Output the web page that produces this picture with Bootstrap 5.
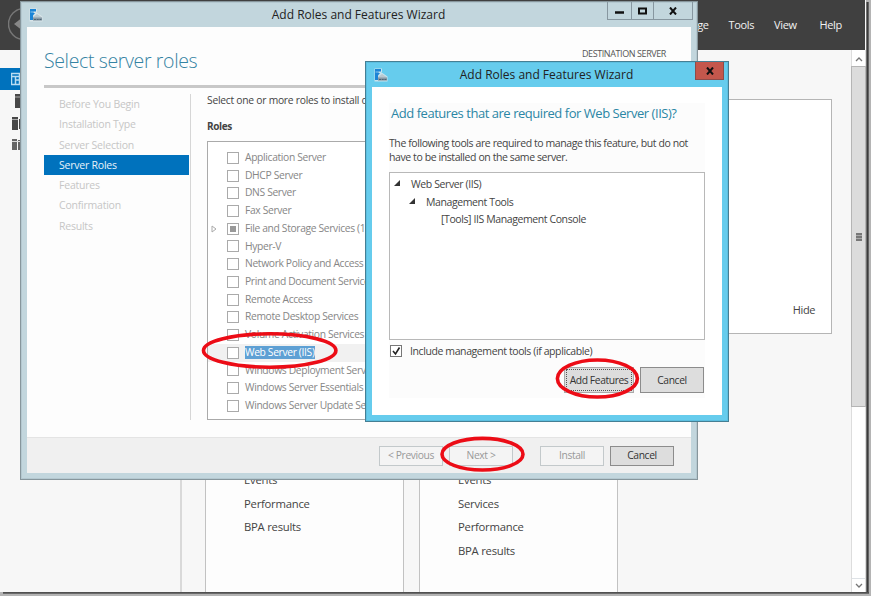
<!DOCTYPE html>
<html lang="en">
<head>
<meta charset="utf-8">
<title>Add Roles and Features Wizard</title>
<meta name="viewport" content="width=device-width, initial-scale=1">
<link href="https://cdn.jsdelivr.net/npm/bootstrap@5.3.0/dist/css/bootstrap.min.css" rel="stylesheet">
<style>
html,body{width:871px;height:596px;overflow:hidden}
body{font-family:"Open Sans","Noto Sans",sans-serif;font-size:11px;line-height:16px;color:#444;background:#b4b4b4;white-space:nowrap}
svg{display:block;flex:none}
.desk{width:871px;height:596px;overflow:hidden}
.manager{width:866px;height:592px;background:#f7f7f7}
.edge-r{width:3px;height:592px;left:866px;top:2px;background:linear-gradient(90deg,#8d8d8d,#3c3c3c,#777)}
.edge-b{left:3px;top:592px;width:866px;height:2px;background:linear-gradient(#444,#777)}
.topbar{height:50px;background:#404040;color:#f2f2f2;padding-left:8px;width:865px}
.topbar .menu-group{margin-left:auto;width:178px}
.topbar .menu-group span{width:46px;letter-spacing:-.35px}
.topbar .menu-group span:first-child{width:42px;margin-left:-2px;margin-right:2px}
.sidebar{width:182px;border-right:2px solid #d9d9d9;padding-top:18px}
.side-item{height:22px;padding-left:11px}
.side-item.on{background:#0072bd}
.stage{width:669px;padding:49px 0 0 23px}
.welcome{width:627px;height:235px;background:#fff;border:1px solid #b5b5b5;padding:0 16px 15px;letter-spacing:-.4px;flex:none}
.tile{width:199px;height:259px;border:1px solid #c2c2c2;border-bottom:0;background:#fdfdfd;padding:133px 0 0 38px;font-size:11.300px;line-height:23.5px;letter-spacing:-.25px}
.sbar{width:15px;border:solid #ddd;border-width:0 1px;background:#fff}
.sbtn{height:14px}
.thumb{height:341px;background:#dcdcdc;border:1px solid #b5b5b5;margin:0 -1px}
.grip{width:6px;height:8px;background:repeating-linear-gradient(#777 0 2px,#aaa 2px 3px)}
.win{border:1px solid #87969c;background:#c2d6dd}
.wizard{left:20px;top:1px;width:678px;height:479px;padding:0 6px 6px;box-shadow:inset 0 0 0 1px #b4c8d0}
.ttl{height:25px;color:#222;font-size:12px}
.ttl .appicon{margin-left:2px}
.ttl .endgap{width:17px}
.caps{right:4px;top:0;height:18px;border:1px solid #8797a0;border-top:0}
.caps span{border-right:1px solid #8797a0;height:17px}
.caps span:last-child{border:0}
.client{height:410px;background:#fdfdfd;padding:17px 17px 0}
.wfoot{height:36px;background:#f0f0f0;border-top:1px solid #e4e4e4;padding-right:17px}
h1.head{font-size:19.5px;line-height:30px;font-weight:300;color:#3583a3;margin:2px 0 0;letter-spacing:-.37px}
.dest{font-size:9px;letter-spacing:-.41px;color:#555;margin:-1px 8px 0 0;height:14px;line-height:14px}
.rule{height:3px;background:#c8c8c8;margin-top:9px}
.steps{width:147px;height:326px;margin-top:6px;border-right:1px solid #d6d6d6;padding-right:1px;color:#c6c6c6;font-size:10.5px}
.steps div{height:20.3px;line-height:21.500px;padding-left:15px;letter-spacing:-.22px}
.steps .on{background:#0072bd;color:#e9f3fa}
.roles{margin-left:16px;width:460px}
.listbox{width:450px;height:279px;border:1px solid #aaa;background:#fff;padding-top:7px;color:#868686}
.role{height:17.73px;line-height:17.7px;letter-spacing:-.35px;font-size:10.3px}
.role .tw{width:19px;padding-left:3px}
.role.hot{background:#f1f1f1}
.cb{width:12px;height:12px;border:1px solid #aaa;background:#fff;margin-right:6px;flex:none}
.sel{background:#5ea0d4;color:#fff;line-height:13px}
.ubtn{height:20px;width:64px;border:1px solid #c3c9cb;background:#f4f4f4;color:#999;font-size:10.3px;line-height:17px;padding:0;border-radius:0;letter-spacing:-.4px}
.ubtn.act{background:#ddd;border-color:#8c8c8c;color:#333}
.dialog{left:365px;top:61px;width:364px;height:361px;background:#66cced;border-color:#457f94;padding:0 6px 6px;box-shadow:inset 0 0 0 1px #5cbfe0}
.dialog .ttl .endgap{width:17px}
.xred{right:4px;top:0;width:29px;height:18px;background:#c4574c;border:1px solid #8d4c4a;border-top:0}
.dclient{height:328px;background:#fff;padding:16px 17px 0}
.soft{background:#fcfcfc}
h2.ask{font-size:13px;line-height:20px;margin:0 0 14px 2px;font-weight:400;color:#2b86a5;letter-spacing:-.46px}
.msg{font-size:10.5px;line-height:13.5px;letter-spacing:-.41px;height:35px;margin:0}
.tree{height:168px;border:1px solid #b8b8b8;background:#fff;padding-top:2px;letter-spacing:-.4px;font-size:10.5px}
.tree div{height:17.8px}
.inc{letter-spacing:-.4px}
.rings{left:0;top:0;pointer-events:none}
</style>
<script src="https://cdn.jsdelivr.net/npm/bootstrap@5.3.0/dist/js/bootstrap.bundle.min.js"></script>
</head>
<body>
<svg width="0" height="0" class="position-absolute">
  <symbol id="srv" viewBox="0 0 14 14">
    <path d="M.5.500h7.500v3.500H7l6.500 4.500v5H.5z" fill="#dfe8ec" opacity=".8"/>
    <path d="M1 1h6v2.500H4.500V5H6L4 7.500V12H1z" fill="#1b84d6"/>
    <path d="M1.500 4h3" stroke="#8cc6ec"/>
    <path d="M4 12.500V9l4-3 4.500 3v3.500z" fill="#b9c8cf"/>
    <path d="M4 9.500h9v3H4z" fill="#8799a5"/>
    <path d="M5 11.500h7.500" stroke="#4f6474" stroke-width="1.200" stroke-dasharray="2 .7"/>
  </symbol>
  <symbol id="exp" viewBox="0 0 7 7"><path d="M6 0v6H0z" fill="#333"/></symbol>
</svg>
<div class="desk position-relative">
  <div class="manager d-flex flex-column">
    <header class="topbar d-flex align-items-center flex-shrink-0">
      <svg width="34" height="34" viewBox="0 0 34 34"><circle cx="16" cy="16" r="15.500" fill="none" stroke="#777" stroke-width="1.500"/><path d="M6 16l9-7v14z" fill="#888"/></svg>
      <nav class="menu-group d-flex"><span>nage</span><span>Tools</span><span>View</span><span>Help</span></nav>
    </header>
    <div class="d-flex flex-grow-1" style="min-height:0">
      <aside class="sidebar flex-shrink-0">
        <div class="side-item on d-flex align-items-center"><svg width="14" height="14"><path d="M.5 1.500h13v11H.5zM.5 4.500h13M4.500 4.500v8M4.500 8h9M8.500 2v10" fill="none" stroke="#b9dcf1" stroke-width="1.500"/></svg></div>
        <div class="side-item d-flex align-items-center"><svg width="14" height="14"><path d="M4 0h10v14H4z" fill="#484848"/><path d="M4 3h9" stroke="#aaa"/></svg></div>
        <div class="side-item d-flex align-items-center"><svg width="14" height="14"><path d="M1 1h6v13H1zM8 3h6v10H8z" fill="#484848"/><path d="M1 3.500h6" stroke="#aaa"/></svg></div>
        <div class="side-item d-flex align-items-center"><svg width="14" height="12"><path d="M1 0h5v11H1zM7 1h4v10H7zM10 4h4v8h-4z" fill="#666"/><path d="M1 2.500h8" stroke="#ddd"/></svg></div>
      </aside>
      <main class="stage flex-shrink-0 d-flex flex-column">
        <section class="welcome d-flex justify-content-end align-items-end"><span>Hide</span></section>
        <div class="d-flex flex-shrink-0" style="gap:15px">
          <section class="tile"><div>Events</div><div>Performance</div><div>BPA results</div></section>
          <section class="tile"><div>Events</div><div>Services</div><div>Performance</div><div>BPA results</div></section>
        </div>
      </main>
      <div class="sbar d-flex flex-column">
        <div class="sbtn d-flex justify-content-center align-items-center" style="margin-top:2px"><svg width="8" height="5"><path d="M1 4l3-3 3 3" fill="none" stroke="#777" stroke-width="1.300"/></svg></div>
        <div class="thumb d-flex justify-content-center align-items-center"><div class="grip"></div></div>
        <div class="sbtn d-flex justify-content-center align-items-center mt-auto border-top"><svg width="8" height="5"><path d="M1 1l3 3 3-3" fill="none" stroke="#777" stroke-width="1.300"/></svg></div>
      </div>
    </div>
  </div>
  <div class="edge-r position-absolute"></div><div class="edge-b position-absolute"></div>

  <section class="win wizard position-absolute">
    <div class="ttl d-flex align-items-center">
      <svg width="14" height="14" class="appicon"><use href="#srv"/></svg><span class="flex-grow-1 text-center">Add Roles and Features Wizard</span><i class="endgap"></i>
    </div>
    <div class="caps position-absolute d-flex">
      <span class="d-flex align-items-center justify-content-center" style="width:24px"><svg width="9" height="9"><path d="M0 6.500h9" stroke="#111" stroke-width="2.500"/></svg></span>
      <span class="d-flex align-items-center justify-content-center" style="width:22px"><svg width="9" height="8"><path d="M1 1.500h7v5H1z" fill="none" stroke="#111" stroke-width="2"/></svg></span>
      <span class="d-flex align-items-center justify-content-center" style="width:38px"><svg width="8" height="8"><path d="M1 .5l6 7M7 .5l-6 7" stroke="#111" stroke-width="2"/></svg></span>
    </div>
    <div class="client">
      <div class="d-flex justify-content-between"><h1 class="head">Select server roles</h1><div class="pt-1"><div class="dest">DESTINATION SERVER</div></div></div>
      <div class="rule"></div>
      <div class="d-flex">
        <nav class="steps flex-shrink-0"><div>Before You Begin</div><div>Installation Type</div><div>Server Selection</div><div class="on">Server Roles</div><div>Features</div><div>Confirmation</div><div>Results</div></nav>
        <div class="roles">
          <div style="padding-top:4px;font-size:10.3px;letter-spacing:-.25px;height:30px">Select one or more roles to install on the selected server.</div>
          <div class="fw-bold" style="font-size:10px;height:23px;letter-spacing:-.35px">Roles</div>
          <div class="listbox">
            <div class="role d-flex align-items-center"><span class="tw"></span><i class="cb"></i>Application Server</div>
            <div class="role d-flex align-items-center"><span class="tw"></span><i class="cb"></i>DHCP Server</div>
            <div class="role d-flex align-items-center"><span class="tw"></span><i class="cb"></i>DNS Server</div>
            <div class="role d-flex align-items-center"><span class="tw"></span><i class="cb"></i>Fax Server</div>
            <div class="role d-flex align-items-center"><span class="tw"><svg width="6" height="8"><path d="M1 1l4 3-4 3z" fill="none" stroke="#aaa"/></svg></span><i class="cb" style="background:#999;box-shadow:inset 0 0 0 2px #fff"></i>File and Storage Services (1 of 12 installed)</div>
            <div class="role d-flex align-items-center"><span class="tw"></span><i class="cb"></i>Hyper-V</div>
            <div class="role d-flex align-items-center"><span class="tw"></span><i class="cb"></i>Network Policy and Access Services</div>
            <div class="role d-flex align-items-center"><span class="tw"></span><i class="cb"></i>Print and Document Services</div>
            <div class="role d-flex align-items-center"><span class="tw"></span><i class="cb"></i>Remote Access</div>
            <div class="role d-flex align-items-center"><span class="tw"></span><i class="cb"></i>Remote Desktop Services</div>
            <div class="role d-flex align-items-center"><span class="tw"></span><i class="cb"></i>Volume Activation Services</div>
            <div class="role hot d-flex align-items-center"><span class="tw"></span><i class="cb"></i><span class="sel">Web Server (IIS)</span></div>
            <div class="role d-flex align-items-center"><span class="tw"></span><i class="cb"></i>Windows Deployment Services</div>
            <div class="role d-flex align-items-center"><span class="tw"></span><i class="cb"></i>Windows Server Essentials Experience</div>
            <div class="role d-flex align-items-center"><span class="tw"></span><i class="cb"></i>Windows Server Update Services</div>
          </div>
        </div>
      </div>
    </div>
    <div class="wfoot d-flex align-items-center justify-content-end">
      <button class="btn ubtn">&lt; Previous</button><button class="btn ubtn" style="margin:0 27px 0 6px">Next &gt;</button><button class="btn ubtn" style="margin-right:6px">Install</button><button class="btn ubtn act">Cancel</button>
    </div>
  </section>

  <section class="win dialog position-absolute">
    <div class="ttl d-flex align-items-center"><svg width="14" height="14" class="appicon"><use href="#srv"/></svg><span class="flex-grow-1 text-center">Add Roles and Features Wizard</span><i class="endgap"></i></div>
    <div class="xred position-absolute d-flex align-items-center justify-content-center"><svg width="8" height="8"><path d="M1 .5l6 7M7 .5l-6 7" stroke="#111" stroke-width="2"/></svg></div>
    <div class="dclient">
      <div class="soft"><h2 class="ask">Add features that are required for Web Server (IIS)?</h2>
      <p class="msg">The following tools are required to manage this feature, but do not<br>have to be installed on the same server.</p></div>
      <div class="tree">
        <div class="d-flex align-items-center" style="padding-left:4px"><svg width="7" height="7" style="margin-right:10px"><use href="#exp"/></svg>Web Server (IIS)</div>
        <div class="d-flex align-items-center" style="padding-left:19px"><svg width="7" height="7" style="margin-right:10px"><use href="#exp"/></svg>Management Tools</div>
        <div class="d-flex align-items-center" style="padding-left:51px">[Tools] IIS Management Console</div>
      </div>
      <div class="soft">
        <div class="d-flex align-items-center" style="height:22px;font-size:10.5px"><i class="cb" style="border-color:#777;margin:0 8px 0 1px"><svg width="10" height="10"><path d="M2 5l2.500 3L8.500 1.500" fill="none" stroke="#222" stroke-width="1.600"/></svg></i><span class="inc">Include management tools (if applicable)</span></div>
        <div class="d-flex justify-content-end" style="height:36px;padding:5px 1px 0 0"><button class="btn ubtn act" style="width:70px;height:26px;outline:1px dotted #555;outline-offset:-3px;margin-right:6px;border-color:#aaa">Add Features</button><button class="btn ubtn act" style="width:64px;height:26px">Cancel</button></div>
      </div>
    </div>
  </section>
  <svg class="rings position-absolute" width="871" height="596" fill="none" stroke="#ec0c16" stroke-width="3.600">
    <ellipse cx="269.700" cy="350.500" rx="66.200" ry="16.700"/><ellipse cx="597.400" cy="378.500" rx="40" ry="18.500"/><ellipse cx="482.500" cy="454.200" rx="40.500" ry="15.800"/>
  </svg>
</div>
</body>
</html>
